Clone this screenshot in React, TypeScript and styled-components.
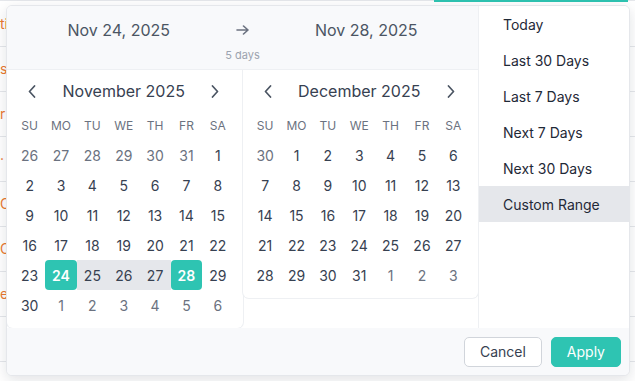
import styled, { createGlobalStyle } from 'styled-components';

const TEAL = '#2ec4b2';

const GlobalStyle = createGlobalStyle`
  body {
    margin: 0;
    font-family: Inter, 'Liberation Sans', sans-serif;
    background: #fff;
  }
`;

interface DayCellData {
  date: Date;
  inMonth: boolean;
}

const WEEKDAYS = ['SU', 'MO', 'TU', 'WE', 'TH', 'FR', 'SA'];
const MONTHS = [
  'January', 'February', 'March', 'April', 'May', 'June',
  'July', 'August', 'September', 'October', 'November', 'December',
];

const PRESETS = ['Today', 'Last 30 Days', 'Last 7 Days', 'Next 7 Days', 'Next 30 Days', 'Custom Range'];

const RANGE_START = new Date(2025, 10, 24);
const RANGE_END = new Date(2025, 10, 28);

// the page behind the picker: only the left edge of each title shows
const HIDDEN_TITLES = ['tion Overview', 's Report', 'r Review', '· Summary', 'Campaign', 'Operations', 'eam Sync'];

const buildDays = (year: number, month: number): DayCellData[] => {
  const first = new Date(year, month, 1);
  const offset = first.getDay();
  const daysInMonth = new Date(year, month + 1, 0).getDate();
  const weeks = Math.ceil((offset + daysInMonth) / 7);
  return Array.from({ length: weeks * 7 }, (_, i) => {
    const date = new Date(year, month, 1 - offset + i);
    return { date, inMonth: date.getMonth() === month };
  });
};

const sameDay = (a: Date, b: Date) => a.getTime() === b.getTime();

const Chevron = ({ dir }: { dir: 'left' | 'right' }) => (
  <svg width="8" height="13" viewBox="0 0 8 13" fill="none">
    <polyline
      points={dir === 'left' ? '6.5,1 1.5,6.5 6.5,12' : '1.5,1 6.5,6.5 1.5,12'}
      stroke="#4b5563"
      strokeWidth="1.7"
      strokeLinecap="round"
      strokeLinejoin="round"
    />
  </svg>
);

const ArrowRight = () => (
  <svg width="13" height="10" viewBox="0 0 13 10" fill="none">
    <path
      d="M1 5h11M7.5 1l4.5 4-4.5 4"
      stroke="#6b7280"
      strokeWidth="1.6"
      strokeLinecap="round"
      strokeLinejoin="round"
    />
  </svg>
);

const MonthCalendar = ({ year, month }: { year: number; month: number }) => {
  const days = buildDays(year, month);
  return (
    <Panel>
      <MonthHeader>
        <NavButton aria-label="Previous month">
          <Chevron dir="left" />
        </NavButton>
        <MonthTitle>
          {MONTHS[month]} {year}
        </MonthTitle>
        <NavButton aria-label="Next month">
          <Chevron dir="right" />
        </NavButton>
      </MonthHeader>
      <DayGrid>
        {WEEKDAYS.map((w) => (
          <Weekday key={w}>{w}</Weekday>
        ))}
        {days.map(({ date, inMonth }) => {
          const isEdge = inMonth && (sameDay(date, RANGE_START) || sameDay(date, RANGE_END));
          const isInRange = inMonth && date > RANGE_START && date < RANGE_END;
          return (
            <Day key={date.toISOString()} $muted={!inMonth} $selected={isEdge} $inRange={isInRange}>
              {date.getDate()}
            </Day>
          );
        })}
      </DayGrid>
    </Panel>
  );
};

const App = () => (
  <>
    <GlobalStyle />
    <Page>
      <TopBar>
        <ActiveTab />
      </TopBar>
      {HIDDEN_TITLES.map((title) => (
        <TableRow key={title}>
          <EdgeTitle>{title}</EdgeTitle>
        </TableRow>
      ))}
      <TableRow>
        <RowText $indent={13} $width={283}>ical Thinking Workshop</RowText>
        <RowText $width={155}>Comparative Co</RowText>
        <RowText>11/01/2024 00:00 AM</RowText>
      </TableRow>

      <Popup>
        <Body>
          <RangeColumn>
            <RangeHeader>
              <DatesRow>
                <DateText>Nov 24, 2025</DateText>
                <ArrowSlot>
                  <ArrowRight />
                </ArrowSlot>
                <DateText>Nov 28, 2025</DateText>
              </DatesRow>
              <DaysCount>5 days</DaysCount>
            </RangeHeader>
            <Calendars>
              <MonthCalendar year={2025} month={10} />
              <MonthCalendar year={2025} month={11} />
            </Calendars>
          </RangeColumn>
          <PresetList>
            {PRESETS.map((p) => (
              <PresetItem key={p} $active={p === 'Custom Range'}>
                {p}
              </PresetItem>
            ))}
          </PresetList>
        </Body>
        <Footer>
          <Button type="button">Cancel</Button>
          <Button type="button" $primary>
            Apply
          </Button>
        </Footer>
      </Popup>
    </Page>
  </>
);

export default App;

const Page = styled.div`
  position: relative;
  width: 635px;
  height: 381px;
  overflow: hidden;
  background: #fff;
`;

const TopBar = styled.div`
  display: flex;
  height: 2px;
  padding-left: 434px;
  box-sizing: border-box;
  border-top: 1px solid #e5e7eb;
`;

const ActiveTab = styled.div`
  width: 194px;
  height: 2px;
  margin-top: -1px;
  background: ${TEAL};
`;

const TableRow = styled.div`
  display: flex;
  align-items: center;
  height: 45px;
  box-sizing: border-box;
  border-bottom: 1px solid #e5e7eb;
  font-size: 14px;
  line-height: 20px;
  white-space: nowrap;
`;

const EdgeTitle = styled.div`
  width: 6px;
  overflow: hidden;
  color: #ea7a30;
`;

const RowText = styled.div<{ $indent?: number; $width?: number }>`
  flex: ${({ $width }) => ($width ? `0 0 ${$width}px` : '1')};
  box-sizing: border-box;
  overflow: hidden;
  padding-left: ${({ $indent }) => $indent ?? 0}px;
  margin-top: -6px;
  color: #374151;
`;

const Popup = styled.div`
  position: absolute;
  top: 5px;
  left: 6px;
  width: 624px;
  height: 371px;
  box-sizing: border-box;
  display: flex;
  flex-direction: column;
  overflow: hidden;
  background: #fff;
  border: 1px solid #e5e7eb;
  border-radius: 6px;
  box-shadow: 0 4px 14px rgba(17, 24, 39, 0.12);
`;

const Body = styled.div`
  display: flex;
  height: 322px;
`;

const RangeColumn = styled.div`
  display: flex;
  flex-direction: column;
  width: 471px;
`;

const RangeHeader = styled.div`
  height: 64px;
  box-sizing: border-box;
  padding-top: 13px;
  background: #f8f9fb;
  border-bottom: 1px solid #e5e7eb;
`;

const DatesRow = styled.div`
  display: grid;
  grid-template-columns: 1fr 24px 1fr;
  align-items: center;
`;

const DateText = styled.div`
  text-align: center;
  font-size: 16px;
  line-height: 22px;
  color: #4b5563;
`;

const ArrowSlot = styled.div`
  display: flex;
  justify-content: center;
`;

const DaysCount = styled.div`
  margin-top: 7px;
  text-align: center;
  font-size: 11px;
  line-height: 15px;
  color: #9ca3af;
`;

const Calendars = styled.div`
  display: flex;
  align-items: flex-start;
`;

const Panel = styled.div`
  flex: 1;
  padding: 0 9px 8px 7px;
  background: #fff;
  border-radius: 0 0 6px 6px;
  box-shadow: 0 0 0 1px #eef0f3;
`;

const MonthHeader = styled.div`
  display: flex;
  align-items: center;
  justify-content: space-between;
  height: 40px;
  padding: 2px 14px 0 14px;
  box-sizing: border-box;
`;

const NavButton = styled.button`
  display: flex;
  padding: 0;
  background: none;
  border: none;
  cursor: pointer;
`;

const MonthTitle = styled.div`
  font-size: 16px;
  color: #374151;
`;

const DayGrid = styled.div`
  display: grid;
  grid-template-columns: repeat(7, 1fr);
  grid-auto-rows: 30px;
`;

const Weekday = styled.div`
  display: flex;
  align-items: center;
  justify-content: center;
  font-size: 12px;
  color: #6b7280;
`;

const Day = styled.div<{ $muted?: boolean; $selected?: boolean; $inRange?: boolean }>`
  display: flex;
  align-items: center;
  justify-content: center;
  font-size: 14px;
  font-weight: ${({ $selected }) => ($selected ? 600 : 400)};
  color: ${({ $muted, $selected }) => ($selected ? '#fff' : $muted ? '#6b7280' : '#374151')};
  background: ${({ $selected, $inRange }) => ($selected ? TEAL : $inRange ? '#e5e7eb' : 'transparent')};
  border-radius: ${({ $selected }) => ($selected ? '4px' : '0')};
`;

const PresetList = styled.ul`
  flex: 1;
  margin: 0;
  padding: 0;
  list-style: none;
  background: #fff;
  border-left: 1px solid #eef0f3;
`;

const PresetItem = styled.li<{ $active?: boolean }>`
  display: flex;
  align-items: center;
  height: 36px;
  padding-left: 24px;
  font-size: 14px;
  color: #1f2937;
  background: ${({ $active }) => ($active ? '#e5e7eb' : 'transparent')};
  cursor: pointer;
`;

const Footer = styled.div`
  flex: 1;
  display: flex;
  align-items: center;
  justify-content: flex-end;
  gap: 9px;
  padding-right: 8px;
  background: #f8f9fb;
`;

const Button = styled.button<{ $primary?: boolean }>`
  height: 30px;
  padding: 0 15px;
  font-family: Inter, 'Liberation Sans', sans-serif;
  font-size: 14px;
  color: ${({ $primary }) => ($primary ? '#fff' : '#374151')};
  background: ${({ $primary }) => ($primary ? TEAL : '#fff')};
  border: 1px solid ${({ $primary }) => ($primary ? TEAL : '#d1d5db')};
  border-radius: 5px;
  cursor: pointer;
`;
